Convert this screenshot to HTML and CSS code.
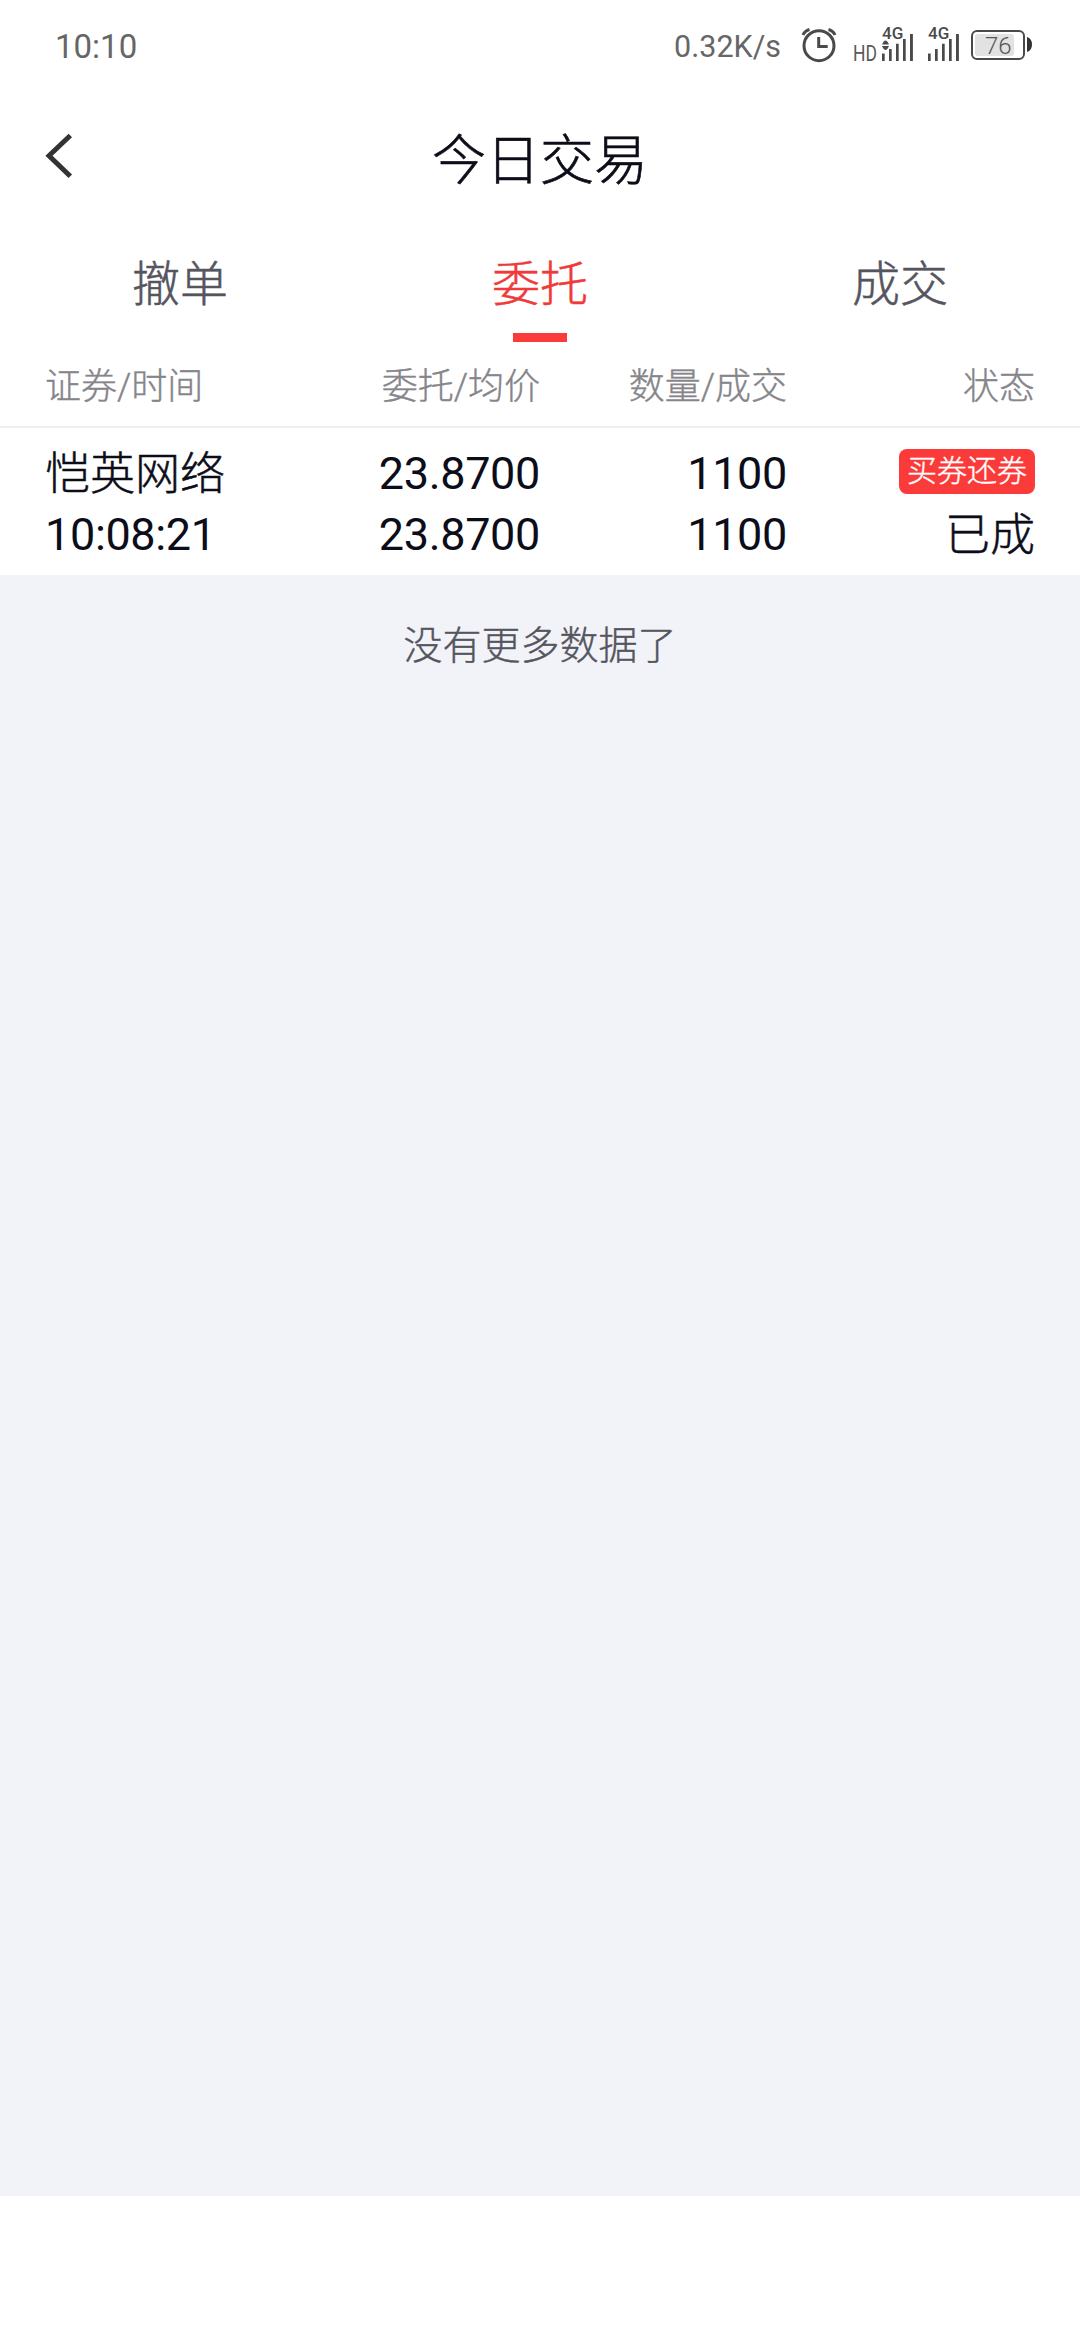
FILE: index.html
```html
<!DOCTYPE html>
<html lang="zh-CN">
<head>
<meta charset="utf-8">
<title>今日交易</title>
<link rel="stylesheet" href="styles.css">
</head>
<body>
<div class="screen">
  <div class="status-bar">
    <span class="clock">10:10</span>
    <span class="speed">0.32K/s</span>
    <svg class="alarm" width="36" height="36" viewBox="801 28 36 36" fill="none" stroke="#4a4a4a" stroke-width="3">
      <circle cx="819" cy="45.7" r="15"/>
      <path d="M818.7 37v9.4h9"/>
      <path d="M803 35q1.600-4 6.500-5.500M835 35q-1.600-4-6.500-5.500"/>
    </svg>
    <svg class="signals" width="106" height="40" viewBox="854 24 106 40" fill="#4a4a4a">
      <text class="hd" x="853" y="61" textLength="24" lengthAdjust="spacingAndGlyphs">HD</text>
      <text class="net" x="882" y="39">4G</text>
      <path d="M882 44.500q3.500-8 7 0zM882 45.900q3.500 8 7 0z"/>
      <path d="M882 53.500h2.700V61H882zM889 49h2.700v12H889zM896 43.700h2.700V61H896zM903 39h2.700v22H903zM910 34h2.900v27H910z"/>
      <text class="net" x="928" y="39">4G</text>
      <path d="M928 53.500h2.700V61H928zM935 49h2.700v12H935zM942 43.700h2.700V61H942zM949 39h2.700v22H949zM956 34h2.900v27H956z"/>
    </svg>
    <svg class="battery" width="62" height="32" viewBox="971 29 62 32">
      <rect x="972" y="31" width="52" height="28" rx="5" fill="none" stroke="#4a4a4a" stroke-width="2"/>
      <rect x="975" y="34" width="39" height="22" rx="3" fill="#e2e2e2"/>
      <path d="M1027 37q5 1.500 5 7.500t-5 7.500z" fill="#333"/>
      <text class="level" x="985" y="54">76</text>
    </svg>
  </div>

  <header class="title-bar">
    <svg class="back" width="30" height="48" viewBox="44 132 30 48" fill="none" stroke="#333" stroke-width="5">
      <path d="M70.300 135.500L49 155.700L70.300 176.300"/>
    </svg>
    <h1 class="title">今日交易</h1>
  </header>

  <nav class="tabs">
    <a class="tab">撤单</a>
    <a class="tab active">委托</a>
    <a class="tab">成交</a>
  </nav>

  <div class="row head">
    <span>证券/时间</span>
    <span>委托/均价</span>
    <span>数量/成交</span>
    <span>状态</span>
  </div>

  <div class="row order">
    <div class="cell"><span class="han">恺英网络</span><span>10:08:21</span></div>
    <div class="cell"><span>23.8700</span><span>23.8700</span></div>
    <div class="cell"><span>1100</span><span>1100</span></div>
    <div class="cell"><span class="badge">买券还券</span><span class="han">已成</span></div>
  </div>

  <main class="rest">没有更多数据了</main>
</div>
</body>
</html>
```
FILE: styles.css
```css
* { box-sizing: border-box; }
body {
  margin: 0;
  background: #fff;
  font-family: Roboto, "Noto Sans CJK SC", sans-serif;
  color: #0d0d1a;
}
.screen {
  width: 1080px;
  height: 2340px;
  display: flex;
  flex-direction: column;
  padding-bottom: 144px;
}
.status-bar {
  height: 90px;
  display: flex;
  align-items: center;
  padding: 2px 47px 0 55px;
  color: #666;
}
.clock { font-size: 33px; margin-right: auto; }
.speed { font-size: 30.500px; margin-right: 20px; }
.alarm { margin-right: 17px; }
.signals { margin-right: 11px; margin-top: -4px; overflow: visible; }
.battery { margin-top: -2px; }
.hd { font-size: 22px; font-weight: 400; fill: #5a5a5a; }
.net { font-size: 17px; font-weight: 500; }
.level { font-size: 24px; font-weight: 300; fill: #555; }
.title-bar {
  height: 135px;
  display: grid;
  grid-template-columns: 74px 1fr 74px;
  align-items: center;
}
.back { margin: -3px 0 0 44px; }
.title {
  margin: -3px 0 0;
  font-size: 54px;
  font-weight: 300;
  text-align: center;
  -webkit-text-stroke: 0.6px;
}
.tabs {
  height: 117px;
  display: grid;
  grid-template-columns: repeat(3, 1fr);
}
.tab {
  display: flex;
  flex-direction: column;
  align-items: center;
  justify-content: space-between;
  font-size: 48px;
  font-weight: 300;
  line-height: 120px;
  height: 117px;
  color: #55555e;
  -webkit-text-stroke: 0.5px;
}
.active { color: #f03a3a; }
.active::after {
  content: "";
  width: 54px;
  height: 9px;
  margin-top: -12px;
  flex: none;
  background: #fb3a3a;
}
.row {
  display: grid;
  grid-template-columns: 247px 248px 247px 248px;
  padding: 0 45px;
}
.row > :not(:first-child) { text-align: right; }
.head {
  height: 86px;
  font-size: 36px;
  font-weight: 300;
  line-height: 91px;
  color: #85858a;
  border-bottom: 2px solid #eee;
  -webkit-text-stroke: 0.4px;
}
.order {
  height: 147px;
  padding-top: 15px;
  font-size: 45px;
  line-height: 61px;
  letter-spacing: -0.35px;
}
.cell { display: flex; flex-direction: column; align-items: flex-start; }
.cell:not(:first-child) { align-items: flex-end; }
.cell .han {
  height: 61px;
  line-height: 64px;
  font-weight: 300;
  letter-spacing: 0;
  -webkit-text-stroke: 0.5px;
}
.cell .badge {
  height: 45px;
  margin: 6px 0 10px;
  padding: 0 8px;
  border-radius: 8px;
  background: #fb3a3a;
  color: #fff;
  font-size: 30px;
  font-weight: 300;
  line-height: 44px;
  letter-spacing: 0;
  -webkit-text-stroke: 0.4px;
}
.rest {
  flex: 1;
  padding-top: 41px;
  background: #f2f3f8;
  color: #55555e;
  font-size: 39px;
  font-weight: 300;
  line-height: 61px;
  text-align: center;
  -webkit-text-stroke: 0.4px;
}
```
